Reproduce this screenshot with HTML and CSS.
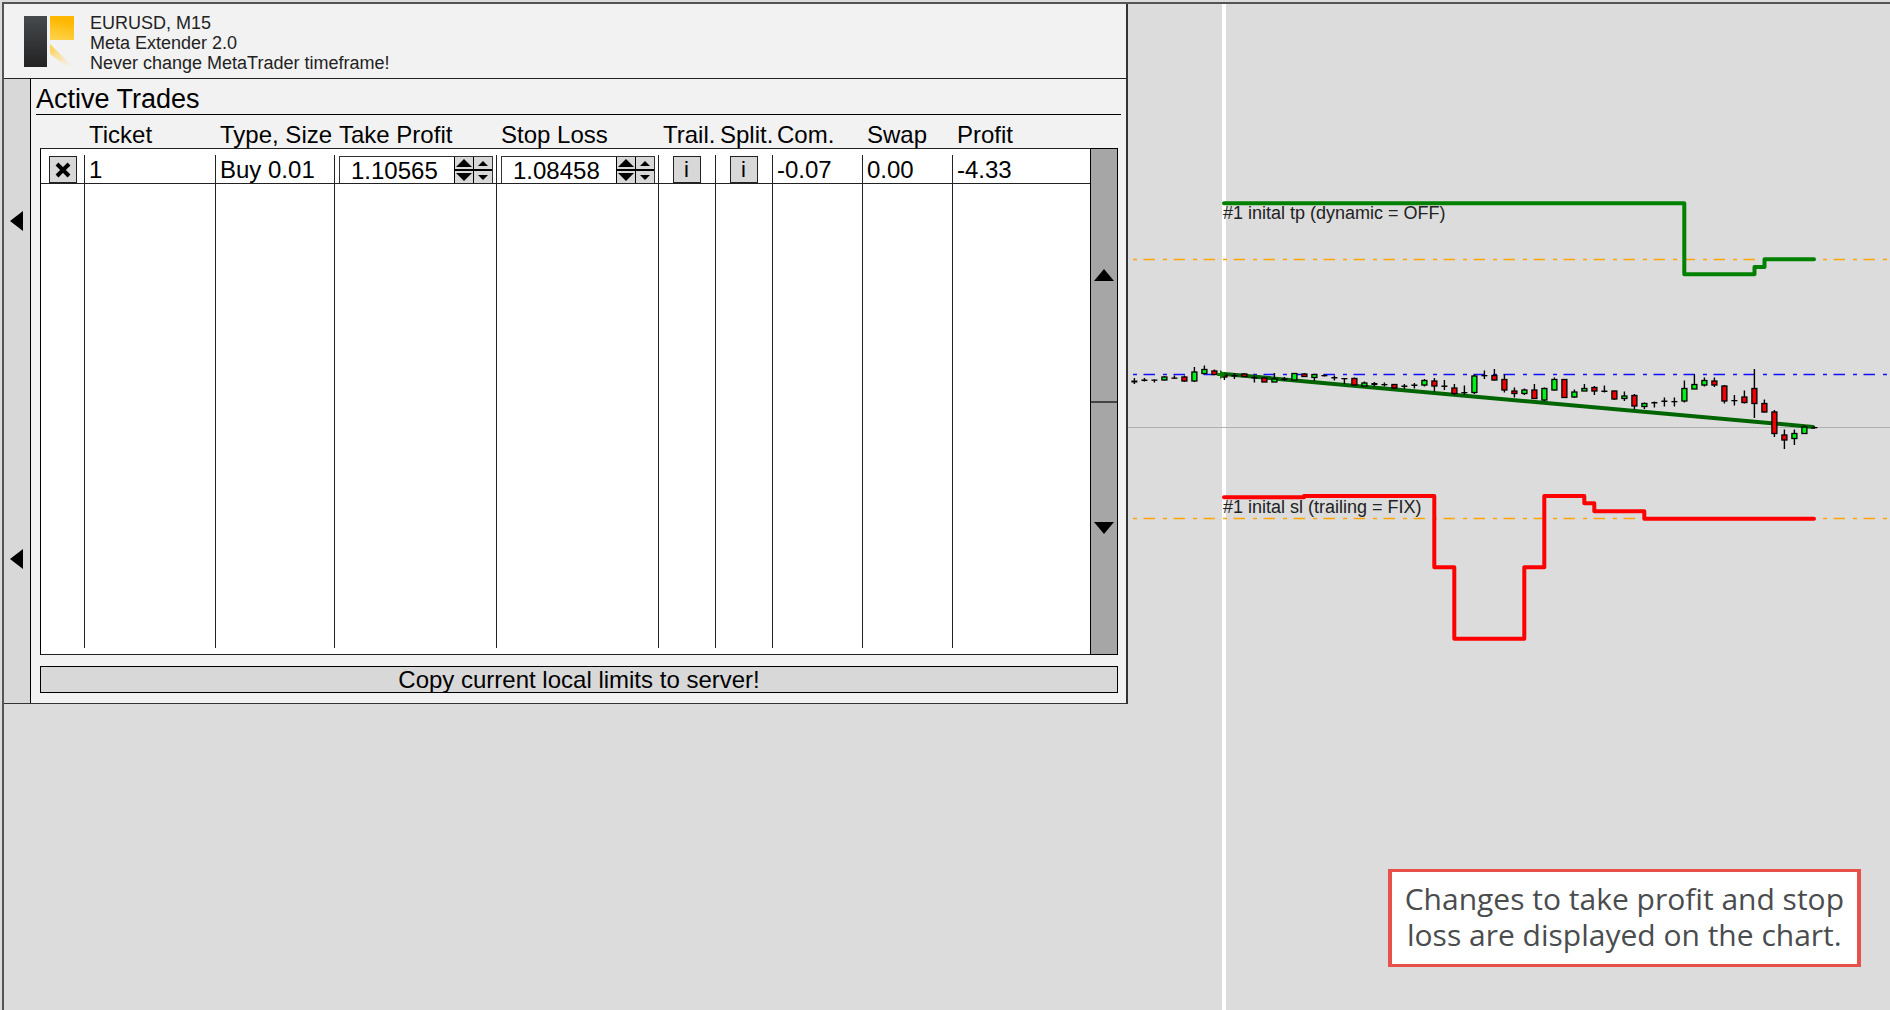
FILE: index.html
```html
<!DOCTYPE html>
<html lang="en">
<head>
<meta charset="utf-8">
<title>Meta Extender 2.0</title>
<link rel="stylesheet" href="styles.css">
</head>
<body>
<div class="app">
  <section class="panel">
    <header class="panel-header">
      <svg class="logo" width="52" height="52" viewBox="0 0 52 52" aria-hidden="true">
        <defs>
          <linearGradient id="dark" x1="0" y1="0" x2="0" y2="1"><stop offset="0" stop-color="#464a4d"/><stop offset="1" stop-color="#222"/></linearGradient>
          <linearGradient id="gold" x1="0.6" y1="0" x2="0.4" y2="1"><stop offset="0.2" stop-color="#fdb900"/><stop offset="1" stop-color="#ffd149"/></linearGradient>
          <linearGradient id="fade" x1="0" y1="0" x2="0.7" y2="1"><stop offset="0" stop-color="#ffcf4a"/><stop offset="1" stop-color="#f2f2f2"/></linearGradient>
        </defs>
        <rect x="0" y="0" width="23" height="51" fill="url(#dark)"/>
        <rect x="26" y="0" width="24" height="24" fill="url(#gold)"/>
        <path d="M26 28L50 52H45L26 38Z" fill="url(#fade)"/>
      </svg>
      <div class="titles">
        <div>EURUSD, M15</div>
        <div>Meta Extender 2.0</div>
        <div>Never change MetaTrader timeframe!</div>
      </div>
    </header>
    <div class="panel-body">
      <nav class="rail">
        <button class="rail-button" aria-label="Previous page"><svg width="13" height="20" viewBox="0 0 13 20"><path d="M0 10L13 0V20Z"/></svg></button>
        <button class="rail-button" aria-label="Collapse"><svg width="13" height="20" viewBox="0 0 13 20"><path d="M0 10L13 0V20Z"/></svg></button>
      </nav>
      <main class="content">
        <h1>Active Trades</h1>
        <div class="trades">
          <table>
            <colgroup>
              <col class="c-close"><col class="c-ticket"><col class="c-type"><col class="c-limit"><col class="c-limit"><col class="c-info"><col class="c-info"><col class="c-num"><col class="c-num"><col>
            </colgroup>
            <thead>
              <tr><th></th><th>Ticket</th><th>Type, Size</th><th>Take Profit</th><th>Stop Loss</th><th>Trail.</th><th>Split.</th><th>Com.</th><th>Swap</th><th>Profit</th></tr>
            </thead>
            <tbody>
              <tr class="trade">
                <td class="mid"><button class="square" aria-label="Close trade"><svg width="16" height="16" viewBox="0 0 16 16"><path d="M2 2L14 14M14 2L2 14" stroke="#000" stroke-width="4"/></svg></button></td>
                <td>1</td>
                <td>Buy 0.01</td>
                <td>
                  <div class="spinner">
                    <input type="text" value="1.10565" aria-label="Take profit">
                    <div class="steps">
                      <button aria-label="Take profit up, large"><svg width="16" height="8" viewBox="0 0 16 8"><path d="M8 0L16 8H0Z"/></svg></button>
                      <button aria-label="Take profit down, large"><svg width="16" height="8" viewBox="0 0 16 8"><path d="M8 8L0 0H16Z"/></svg></button>
                    </div>
                    <div class="steps">
                      <button aria-label="Take profit up, small"><svg width="10" height="5" viewBox="0 0 10 5"><path d="M5 0L10 5H0Z"/></svg></button>
                      <button aria-label="Take profit down, small"><svg width="10" height="5" viewBox="0 0 10 5"><path d="M5 5L0 0H10Z"/></svg></button>
                    </div>
                  </div>
                </td>
                <td>
                  <div class="spinner">
                    <input type="text" value="1.08458" aria-label="Stop loss">
                    <div class="steps">
                      <button aria-label="Stop loss up, large"><svg width="16" height="8" viewBox="0 0 16 8"><path d="M8 0L16 8H0Z"/></svg></button>
                      <button aria-label="Stop loss down, large"><svg width="16" height="8" viewBox="0 0 16 8"><path d="M8 8L0 0H16Z"/></svg></button>
                    </div>
                    <div class="steps">
                      <button aria-label="Stop loss up, small"><svg width="10" height="5" viewBox="0 0 10 5"><path d="M5 0L10 5H0Z"/></svg></button>
                      <button aria-label="Stop loss down, small"><svg width="10" height="5" viewBox="0 0 10 5"><path d="M5 5L0 0H10Z"/></svg></button>
                    </div>
                  </div>
                </td>
                <td class="mid"><button class="square">i</button></td>
                <td class="mid"><button class="square">i</button></td>
                <td>-0.07</td>
                <td>0.00</td>
                <td>-4.33</td>
              </tr>
              <tr class="filler"><td></td><td></td><td></td><td></td><td></td><td></td><td></td><td></td><td></td><td></td></tr>
            </tbody>
          </table>
          <div class="scroller">
            <button aria-label="Scroll up"><svg width="20" height="12" viewBox="0 0 20 12"><path d="M10 0L20 12H0Z"/></svg></button>
            <button aria-label="Scroll down"><svg width="20" height="12" viewBox="0 0 20 12"><path d="M10 12L0 0H20Z"/></svg></button>
          </div>
        </div>
        <button class="copy">Copy current local limits to server!</button>
      </main>
    </div>
  </section>

  <section class="chart">
    <svg class="plot" role="img" aria-label="EURUSD price chart">
      <g transform="translate(-1128 -4)">
        <rect x="1222" y="0" width="4" height="4000" fill="#fff"/>
        <path class="level orange" d="M1113.5 259.5H5000"/>
        <path class="level orange" d="M1113.5 518.5H5000"/>
        <path class="level blue" d="M1113.5 374.5H5000"/>
        <path class="bid" d="M1120 427.5H5000"/>
        <path class="trend" d="M1224 374L1813 427"/>
        <g id="candles"></g>
        <path d="M1217 373H1220V370L1226 374.500L1220 379V376H1217Z" fill="#008000"/>
        <text x="1223" y="219">#1 inital tp (dynamic = OFF)</text>
        <text x="1223" y="513">#1 inital sl (trailing = FIX)</text>
        <path class="limit tp" d="M1224 203.300H1684.300V274.300H1754.500V267H1764.500V259.300H1814"/>
        <path class="limit sl" d="M1224 497.300H1304V496H1434.300V567.300H1454.300V638.700H1524.300V567.300H1544.300V496H1584.300V503.300H1594.300V511.200H1644.300V518.700H1814"/>
      </g>
    </svg>
    <p class="callout">Changes to take profit and stop<br>loss are displayed on the chart.</p>
  </section>
</div>
<script src="chart.js"></script>
</body>
</html>
```

FILE: styles.css
```css
* { box-sizing: border-box; }

body {
  margin: 0;
  background: #dcdcdc;
  color: #000;
  font-family: "Liberation Sans", Arial, sans-serif;
  font-size: 24px;
}

button, input {
  margin: 0;
  padding: 0;
  border: 0;
  border-radius: 0;
  background: #d8d8d8;
  color: inherit;
  font: inherit;
}

button {
  display: flex;
  align-items: center;
  justify-content: center;
}

.app {
  display: grid;
  grid-template-columns: minmax(1060px, 59.6%) 1fr;
  min-height: calc(100vh - 2px);
  margin: 2px 0 0 2px;
  border: solid #555;
  border-width: 2px 0 0 2px;
}

.panel {
  align-self: start;
  background: #f2f2f2;
  border: solid #333;
  border-width: 0 2px 1px 0;
}

.panel-header {
  display: flex;
  gap: 14px;
  height: 75px;
  padding: 12px 20px 0;
  border-bottom: 1px solid #222;
}

.titles {
  margin-top: -3px;
  color: #222;
  font-size: 18px;
  line-height: 20px;
}

.panel-body { display: flex; }

.rail {
  display: flex;
  flex-direction: column;
  justify-content: space-between;
  width: 27px;
  padding: 122px 2px 124px 0;
  background: #d8d8d8;
  border-right: 1px solid #000;
}

.rail-button { height: 40px; }

.content {
  flex: 1;
  min-width: 0;
  padding: 0 5px 10px;
}

h1 {
  margin: 0;
  padding-top: 5px;
  border-bottom: 1px solid #000;
  font-size: 27px;
  font-weight: normal;
  line-height: 30px;
}

.trades {
  display: flex;
  margin: 0 3px 0 4px;
}

table {
  flex: 1;
  width: 100%;
  min-width: 0;
  table-layout: fixed;
  border-spacing: 0;
}

.c-close { width: 44px; }
.c-ticket { width: 131px; }
.c-type { width: 119px; }
.c-limit { width: 162px; }
.c-info { width: 57px; }
.c-num { width: 90px; }

th {
  height: 34px;
  padding: 0 0 0 5px;
  border-bottom: 1px solid #222;
  font-weight: normal;
  line-height: 27px;
  text-align: left;
  vertical-align: bottom;
  white-space: nowrap;
}

td {
  padding: 0 0 0 5px;
  background: #fff linear-gradient(#222, #222) 0 6px / 1px 100% no-repeat;
  line-height: 27px;
  vertical-align: bottom;
}

td:first-child {
  padding: 0;
  background: #fff;
  border-left: 1px solid #000;
}

.trade td {
  height: 35px;
  border-bottom: 1px solid #222;
}

.trade .mid { padding: 0; }

.filler td {
  height: 471px;
  background-size: 1px calc(100% - 6px);
  background-position: 0 0;
  border-bottom: 1px solid #222;
}

.square {
  width: 28px;
  height: 27px;
  margin: 0 auto;
  border: 1px solid #222;
  font-size: 22px;
  line-height: 22px;
}

.spinner {
  display: flex;
  width: 154px;
  height: 27px;
  border: solid #333;
  border-width: 1px 1px 0;
}

.spinner input {
  flex: 1;
  min-width: 0;
  padding-left: 11px;
  background: #fff;
}

.steps {
  display: flex;
  flex-direction: column;
  width: 19px;
  border-left: 1px solid #000;
}

.steps button { flex: 1; }
.steps button:first-child { border-bottom: 2px solid #000; }

.scroller {
  display: flex;
  flex: none;
  flex-direction: column;
  width: 28px;
  margin-top: 33px;
  border: 1px solid #000;
}

.scroller button {
  flex: 1;
  background: #a6a6a6;
}

.scroller button:first-child { border-bottom: 2px solid #444; }

.copy {
  width: calc(100% - 7px);
  height: 27px;
  margin: 11px 3px 0 4px;
  border: 1px solid #000;
  line-height: 25px;
}

.chart {
  position: relative;
  min-width: 0;
}

.plot {
  display: block;
  width: 100%;
  height: 100%;
}

.plot text { font-size: 18px; fill: #222; }

.level { fill: none; stroke-width: 1.4; stroke-dasharray: 11.5 8 4 6.5; }
.orange { stroke: #ffa500; }
.blue { stroke: #1010ff; }
.bid { stroke: #b0b0b0; }
.trend { stroke: #006400; stroke-width: 4; stroke-linecap: round; }
.limit { fill: none; stroke-width: 4; stroke-linecap: round; stroke-linejoin: round; }
.tp { stroke: #008000; }
.sl { stroke: #f00; }

.callout {
  position: absolute;
  right: 29px;
  bottom: 43px;
  margin: 0;
  padding: 9px 13px 11px;
  background: #fff;
  border: solid #e8504b;
  border-width: 3px 4px;
  color: #4a4c4e;
  font-family: "Open Sans", sans-serif;
  font-size: 30px;
  line-height: 36px;
  text-align: center;
  white-space: nowrap;
}
```

FILE: chart.js
```js
// One row per 15-minute candle: high, low, body top, body bottom, kind
// (g = rising, r = falling, k = unchanged), in chart pixels.
const candles = [
  [378, 384, 380.5, 382.5, 'k'], [378, 381.5, 379.5, 381, 'k'], [379.5, 382.5, 379.5, 380.5, 'k'],
  [376, 380.5, 377, 380, 'g'], [375.5, 379, 377.5, 378.5, 'k'], [375.5, 382, 377, 381, 'r'],
  [367, 382, 372, 381, 'g'], [365.5, 374, 369.5, 373.5, 'g'], [369.5, 375, 371, 374.5, 'r'],
  [373, 380, 375, 377, 'r'], [373, 379, 375, 376.5, 'k'], [373, 377, 374, 376.5, 'r'],
  [375.5, 382.5, 377, 378.5, 'k'], [377, 382, 378, 382, 'r'], [373, 382, 379, 382, 'g'],
  [377, 381, 378.5, 380, 'k'], [373, 380, 373.5, 380, 'g'], [373, 377, 374, 376.5, 'r'],
  [374, 381, 374.5, 377.5, 'g'], [374, 376.5, 375, 376, 'k'], [375.5, 380.5, 377, 378.5, 'k'],
  [378, 384, 378, 378.5, 'k'], [377.5, 385.5, 378.5, 385, 'r'], [381.5, 386, 383, 386, 'g'],
  [382, 386.5, 383, 385, 'k'], [382.5, 386.5, 384, 385, 'k'], [384, 389, 384.5, 388, 'r'],
  [384, 389, 385.5, 387, 'k'], [383, 388.5, 384.5, 386, 'k'], [379, 386.5, 380.5, 385, 'g'],
  [378, 391.5, 381, 386, 'r'], [380, 390, 385.5, 387, 'k'], [384, 395, 388, 393.5, 'r'],
  [385.5, 395, 392, 392.5, 'k'], [374.5, 394, 376, 392.5, 'g'], [370.5, 379, 375, 376, 'k'],
  [369, 380.5, 375.5, 380, 'r'], [374.5, 392.5, 379.5, 390, 'r'], [387.5, 397.5, 391, 393.5, 'r'],
  [388.5, 395, 390, 393.5, 'g'], [384, 399, 390, 398.5, 'r'], [387.5, 401, 388.5, 400, 'g'],
  [377.5, 390.5, 379.5, 390, 'g'], [379, 398, 379.5, 397.5, 'r'], [389.5, 398, 392, 397, 'g'],
  [384, 391, 388.5, 391, 'g'], [386, 395, 387.5, 391, 'r'], [385.5, 392.5, 390.5, 392, 'k'],
  [390.5, 400, 391, 399, 'r'], [391.5, 401, 396, 398.5, 'g'], [394, 409.5, 395.5, 406, 'r'],
  [402.5, 409, 403.5, 406.5, 'g'], [401.5, 407.5, 402, 403.5, 'k'], [397.5, 406.5, 400.5, 402, 'k'],
  [397.5, 406.5, 401, 401.5, 'k'], [380.5, 402.5, 388.5, 401, 'g'], [374.5, 389, 384.5, 389, 'g'],
  [377.5, 386.5, 380.5, 385, 'g'], [377.5, 387, 381, 385, 'r'], [385, 403.5, 386, 401, 'r'],
  [395, 405.5, 400, 401, 'k'], [390.5, 403.5, 397, 402.5, 'r'], [369, 418, 388.5, 403.5, 'r'],
  [399.5, 412.5, 403.5, 412, 'r'], [410, 437, 412, 433.5, 'r'], [429.5, 449, 435, 440, 'r'],
  [429.5, 445, 433.5, 438.5, 'g'], [425.5, 434, 427, 433.5, 'g'], [426.5, 428.5, 427, 427.5, 'k']
];
const fills = { g: '#00f018', r: '#f00000', k: '#000' };
const layer = document.getElementById('candles');

function rect(x, y, w, h, fill, stroke) {
  const el = document.createElementNS('http://www.w3.org/2000/svg', 'rect');
  const attrs = { x, y, width: w, height: h, fill, stroke, 'stroke-width': 1.3 };
  for (const name in attrs) el.setAttribute(name, attrs[name]);
  layer.appendChild(el);
}

candles.forEach(([high, low, top, bottom, kind], i) => {
  const x = 1134.4 + i * 10;
  rect(x - 0.7, high, 1.4, low - high, '#000', 'none');
  if (kind === 'k') rect(x - 3, top, 6, Math.max(bottom - top, 1.3), '#000', 'none');
  else rect(x - 2.5, top, 5, bottom - top, fills[kind], '#000');
});
```
